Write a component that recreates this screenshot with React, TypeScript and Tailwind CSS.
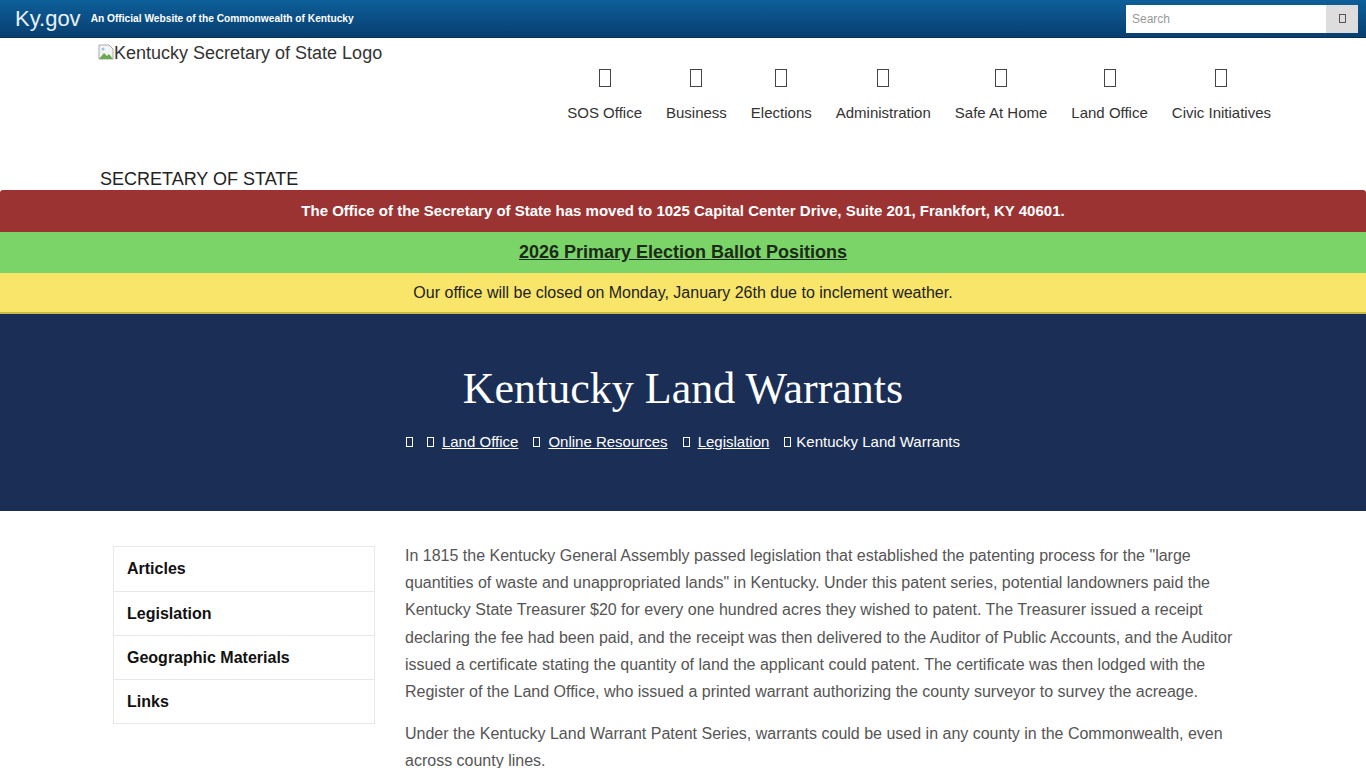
const Tofu = ({ className = '' }: { className?: string }) => (
  <span className={`inline-block border border-current ${className}`} />
);

const navItems = [
  'SOS Office',
  'Business',
  'Elections',
  'Administration',
  'Safe At Home',
  'Land Office',
  'Civic Initiatives',
];

const sideLinks = ['Articles', 'Legislation', 'Geographic Materials', 'Links'];

const App = () => (
  <div className="min-h-screen bg-white font-['Liberation_Sans',Arial,sans-serif] text-[#333]">
    {/* ky.gov strip */}
    <div className="flex h-[38px] items-center justify-between border-b border-[#0a2f55] bg-gradient-to-b from-[#0d5f9a] to-[#083f70] pr-2 pl-[15px]">
      <div className="flex items-center gap-[10px]">
        <span className="text-[22px] leading-none text-[#e8f1f8]">Ky.gov</span>
        <span className="font-bold text-[10.2px] text-white">
          An Official Website of the Commonwealth of Kentucky
        </span>
      </div>
      <div className="flex h-[28px]">
        <input
          placeholder="Search"
          className="h-full w-[200px] bg-white px-[6px] text-[12px] text-[#555] placeholder:text-[#999] outline-none"
        />
        <button className="flex h-full w-[32px] items-center justify-center bg-[#ddd] text-[#555]">
          <Tofu className="h-[9px] w-[7px]" />
        </button>
      </div>
    </div>

    {/* header */}
    <div className="flex h-[152px] pl-[98px]">
      <div className="flex w-[440px] flex-col justify-between pt-[2px]">
        <div className="flex items-center text-[18px] text-[#333]">
          <svg width="16" height="16" viewBox="0 0 16 16" className="mb-[4px]">
            <path d="M1 1h10l4 4v10H1z" fill="#f4f4f4" stroke="#aaa" />
            <path d="M1 15l5-6 3 3 2-2 4 5z" fill="#6aa84f" />
            <circle cx="5" cy="5" r="1.5" fill="#9cc3e6" />
          </svg>
          <span>Kentucky Secretary of State Logo</span>
        </div>
        <div className="pl-[2px] text-[18px] leading-[22px] uppercase text-[#222]">Secretary of State</div>
      </div>
      <nav className="ml-auto mr-[83px] flex pt-[31px]">
        {navItems.map((item) => (
          <a key={item} className="flex flex-col items-center px-3 text-[15px] text-[#333]">
            <Tofu className="h-[18px] w-[12px] text-[#444]" />
            <span className="mt-[15px]">{item}</span>
          </a>
        ))}
      </nav>
    </div>

    {/* alerts */}
    <div className="flex h-[42px] items-center justify-center rounded-t-[3px] bg-[#9c3333] font-bold text-[15px] text-white">
      The Office of the Secretary of State has moved to 1025 Capital Center Drive, Suite 201, Frankfort, KY 40601.
    </div>
    <div className="flex h-[41px] items-center justify-center bg-[#7bd467]">
      <a className="font-bold text-[18px] text-[#1c2a1a] underline">2026 Primary Election Ballot Positions</a>
    </div>
    <div className="flex h-[41px] items-center justify-center border-b-2 border-[#caba4a] bg-[#f8e569] text-[16px] text-[#222]">
      Our office will be closed on Monday, January 26th due to inclement weather.
    </div>

    {/* hero */}
    <div className="flex h-[197px] flex-col items-center bg-[#1b2f56] pt-[49px] text-white">
      <h1 className="font-['Liberation_Serif','Times_New_Roman',serif] text-[44px] leading-[52px]">
        Kentucky Land Warrants
      </h1>
      <div className="mt-[16px] flex items-center text-[15px]">
        <Tofu className="h-[10px] w-[7px]" />
        <Tofu className="ml-[14px] h-[10px] w-[7px]" />
        <a className="ml-[8px] underline">Land Office</a>
        <Tofu className="ml-[15px] h-[10px] w-[7px]" />
        <a className="ml-[8px] underline">Online Resources</a>
        <Tofu className="ml-[15px] h-[10px] w-[7px]" />
        <a className="ml-[8px] underline">Legislation</a>
        <Tofu className="ml-[15px] h-[10px] w-[7px]" />
        <span className="ml-[5px]">Kentucky Land Warrants</span>
      </div>
    </div>

    {/* content */}
    <div className="flex gap-[30px] px-[113px] pt-[35px]">
      <ul className="h-fit w-[262px] shrink-0 border border-[#e8e8e8]">
        {sideLinks.map((link, i) => (
          <li
            key={link}
            className={`flex h-[44px] items-center px-[13px] font-bold text-[16px] text-[#111] ${
              i > 0 ? 'border-t border-[#e8e8e8]' : ''
            }`}
          >
            {link}
          </li>
        ))}
      </ul>
      <div className="-mt-[4px] pr-[10px] text-[16px] leading-[27.2px] text-[#555]">
        <p className="mb-[15px]">
          In 1815 the Kentucky General Assembly passed legislation that established the patenting process for the
          "large quantities of waste and unappropriated lands" in Kentucky. Under this patent series, potential
          landowners paid the Kentucky State Treasurer $20 for every one hundred acres they wished to patent. The
          Treasurer issued a receipt declaring the fee had been paid, and the receipt was then delivered to the
          Auditor of Public Accounts, and the Auditor issued a certificate stating the quantity of land the
          applicant could patent. The certificate was then lodged with the Register of the Land Office, who issued
          a printed warrant authorizing the county surveyor to survey the acreage.
        </p>
        <p>
          Under the Kentucky Land Warrant Patent Series, warrants could be used in any county in the Commonwealth,
          even across county lines.
        </p>
      </div>
    </div>
  </div>
);

export default App;
